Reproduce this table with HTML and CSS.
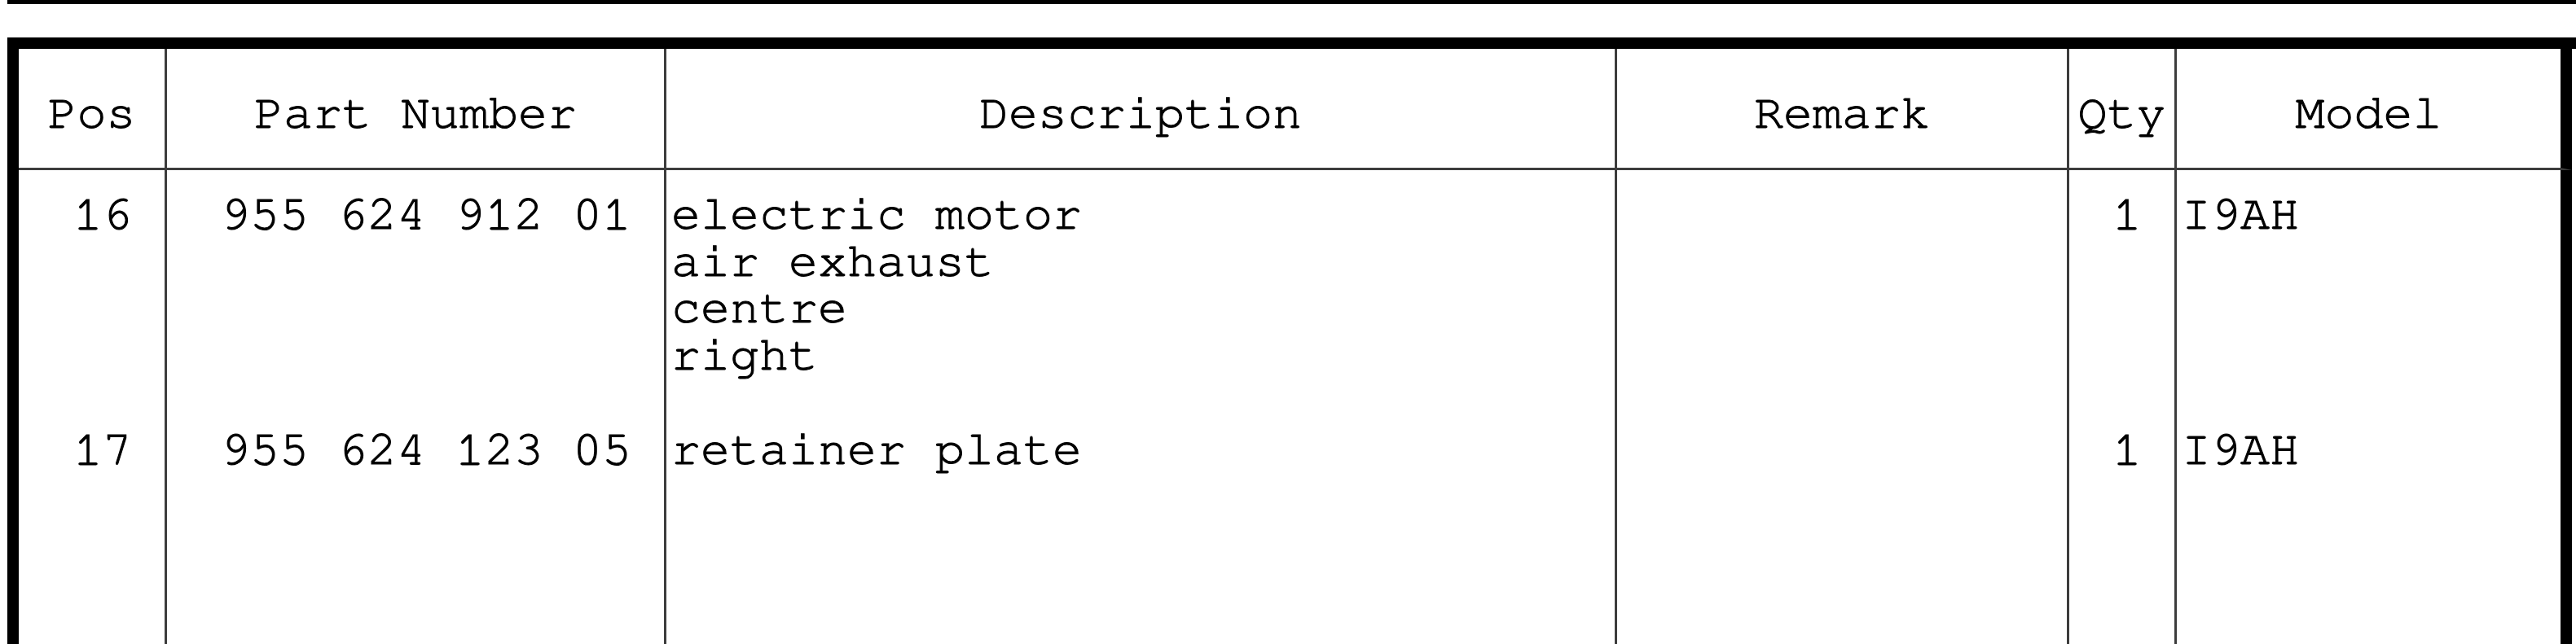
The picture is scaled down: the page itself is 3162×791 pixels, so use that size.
FILE: index.html
```html
<!DOCTYPE html>
<html lang="en">
<head>
    <meta charset="UTF-8">
    <title>Parts List</title>
    <link rel="stylesheet" href="styles.css">
</head>
<body>
    <div class="rule"></div>

    <div class="sheet">
        <table class="parts">
            <thead>
                <tr>
                    <th class="col-pos">Pos</th>
                    <th class="col-part">Part Number</th>
                    <th class="col-desc">Description</th>
                    <th class="col-remark">Remark</th>
                    <th class="col-qty">Qty</th>
                    <th class="col-model">Model</th>
                </tr>
            </thead>
            <tbody>
                <tr class="item">
                    <td class="num">16</td>
                    <td class="num">955 624 912 01</td>
                    <td>electric motor<br>air exhaust<br>centre<br>right</td>
                    <td></td>
                    <td class="num">1</td>
                    <td class="model">I9AH</td>
                </tr>
                <tr class="item last">
                    <td class="num">17</td>
                    <td class="num">955 624 123 05</td>
                    <td>retainer plate</td>
                    <td></td>
                    <td class="num">1</td>
                    <td class="model">I9AH</td>
                </tr>
            </tbody>
        </table>
    </div>
</body>
</html>
```

FILE: styles.css
```css
html, body {
    margin: 0;
    padding: 0;
    background-color: #ffffff;
    overflow: hidden;
}

body {
    width: 3162px;
    height: 791px;
    font-family: "Nimbus Mono PS", "Nimbus Mono L", "FreeMono", "Courier New", "Liberation Mono", monospace;
    color: #000000;
}

/* thin bar left over from the previous page block */
.rule {
    height: 5px;
    margin-left: 9px;
    background-color: #000000;
}

.sheet {
    margin-top: 41px;
    margin-left: 9px;
    border-top: 14px solid #000000;
    border-left: 14px solid #000000;
}

.parts {
    table-layout: fixed;
    border-collapse: separate;
    border-spacing: 0;
    width: 3134px;
    font-size: 60px;
    line-height: 57.5px;
    -webkit-text-stroke: 1.1px #000000; /* scanned Courier looks heavier */
}

.parts th,
.parts td {
    box-sizing: border-box;
    border-right: 3px solid #3c3c3c;
    padding: 0;
}

.parts th {
    height: 149px;
    font-weight: normal;
    text-align: center;
    vertical-align: middle;
    border-bottom: 3px solid #3c3c3c;
    padding-top: 14px;
}

.col-pos { width: 182px; }
.col-part { width: 613px; }
.col-desc { width: 1167px; }
.col-remark { width: 555px; }
.col-qty { width: 132px; }
.col-model { width: 485px; }

.parts th.col-model,
.parts td.model {
    border-right: 14px solid #000000;
}

.item td {
    vertical-align: top;
    padding-top: 26px;
    padding-bottom: 33px;
    padding-left: 6px;
    white-space: pre;
}

.item td.num {
    text-align: right;
    padding-left: 0;
    padding-right: 40px;
}

.item.last td {
    height: 400px;
}
```
